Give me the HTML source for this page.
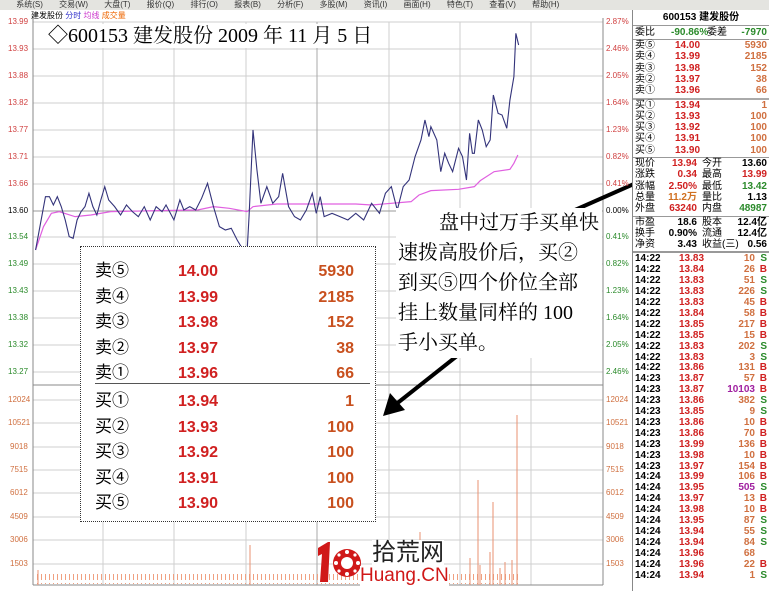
<!DOCTYPE html><html><head><meta charset="utf-8"><style>
*{margin:0;padding:0;box-sizing:border-box}
body{width:769px;height:591px;overflow:hidden;background:#fff;position:relative;font-family:"Liberation Sans","Noto Sans CJK SC",sans-serif}
.a{position:absolute;white-space:nowrap}
.ax{position:absolute;font-size:8px;line-height:8px}
.r{color:#d04040}.g{color:#2a8a2a}.o{color:#d07040}
#panel{position:absolute;left:632px;top:10px;width:137px;height:581px;border-left:1px solid #888;font-size:10px;font-weight:bold}
.row{position:absolute;left:2px;right:2px;height:11px;line-height:11px}
.row span{position:absolute}
.hl{position:absolute;left:0;right:0;height:1px;background:#999}
.bx{position:absolute;font-size:17px;line-height:20px}
</style></head><body>
<div class="a" style="left:0;top:0;width:769px;height:10px;background:#e4e4e0;font-size:8px;line-height:9px;color:#333;word-spacing:14px">&nbsp;系统(S) 交易(W) 大盘(T) 报价(Q) 排行(O) 报表(B) 分析(F) 多股(M) 资讯(I) 画面(H) 特色(T) 查看(V) 帮助(H)</div>
<div class="a" style="left:31px;top:11px;font-size:8px;line-height:9px">建发股份 <span style="color:#33c">分时</span> <span style="color:#c3c">均线</span> <span style="color:#e60">成交量</span></div>
<svg class="a" style="left:0;top:0" width="632" height="591">
<g stroke="#cfcfcf" stroke-width="1">
<line x1="33" y1="22" x2="603" y2="22"/><line x1="33" y1="49" x2="603" y2="49"/><line x1="33" y1="76" x2="603" y2="76"/><line x1="33" y1="103" x2="603" y2="103"/><line x1="33" y1="130" x2="603" y2="130"/><line x1="33" y1="157" x2="603" y2="157"/><line x1="33" y1="184" x2="603" y2="184"/><line x1="33" y1="237" x2="603" y2="237"/><line x1="33" y1="264" x2="603" y2="264"/><line x1="33" y1="291" x2="603" y2="291"/><line x1="33" y1="318" x2="603" y2="318"/><line x1="33" y1="345" x2="603" y2="345"/><line x1="33" y1="372" x2="603" y2="372"/>
<line x1="33" y1="400" x2="603" y2="400"/><line x1="33" y1="423" x2="603" y2="423"/><line x1="33" y1="447" x2="603" y2="447"/><line x1="33" y1="470" x2="603" y2="470"/><line x1="33" y1="493" x2="603" y2="493"/><line x1="33" y1="517" x2="603" y2="517"/><line x1="33" y1="540" x2="603" y2="540"/><line x1="33" y1="564" x2="603" y2="564"/>
<line x1="103" y1="22" x2="103" y2="585"/><line x1="174" y1="22" x2="174" y2="585"/><line x1="246" y1="22" x2="246" y2="585"/><line x1="389" y1="22" x2="389" y2="585"/><line x1="460" y1="22" x2="460" y2="585"/><line x1="531" y1="22" x2="531" y2="585"/>
</g>
<line x1="33" y1="211" x2="603" y2="211" stroke="#999"/>
<line x1="317" y1="22" x2="317" y2="585" stroke="#aaa"/>
<line x1="33" y1="18" x2="33" y2="585" stroke="#888"/><line x1="603" y1="18" x2="603" y2="585" stroke="#888"/>
<line x1="33" y1="385" x2="603" y2="385" stroke="#888"/><line x1="33" y1="585" x2="603" y2="585" stroke="#888"/>
<g transform="translate(0,20) scale(0.3953,0.3333)">
<polyline fill="none" stroke="#e060e0" stroke-width="1.2" vector-effect="non-scaling-stroke" points="90,690 110,620 130,580 150,575 190,590 230,585 280,575 400,572 500,570 540,560 580,565 625,575 640,560 700,552 900,552 940,555 1040,545 1060,525 1090,512 1160,508 1200,500 1215,482 1250,455 1290,448 1300,430 1310,405"/>
<polyline fill="none" stroke="#33337a" stroke-width="1.1" vector-effect="non-scaling-stroke" points="90,690 115,530 125,530 135,555 145,530 155,560 165,600 175,650 185,655 195,600 205,575 215,560 225,520 235,560 245,585 255,540 265,500 275,540 290,560 305,585 320,555 335,575 350,590 365,560 380,600 395,560 410,575 420,555 440,600 455,540 465,570 480,560 495,570 510,535 525,490 540,560 555,620 570,630 585,625 600,660 615,690 622,760 630,590 640,330 650,450 660,550 675,500 690,550 705,530 715,460 730,560 745,590 760,600 775,570 790,520 800,580 810,530 820,590 840,580 860,590 880,600 900,580 920,600 940,550 960,580 975,520 990,500 1005,570 1020,500 1035,480 1050,410 1065,360 1075,300 1085,350 1090,320 1105,360 1115,455 1125,400 1135,430 1145,455 1160,385 1170,410 1180,480 1188,340 1195,400 1200,400 1210,300 1220,330 1230,380 1240,360 1248,225 1260,280 1270,285 1282,325 1290,240 1300,170 1305,40 1312,75"/>
</g>
<defs><pattern id="vp" width="4" height="10" patternUnits="userSpaceOnUse"><rect x="1" y="3" width="1" height="7" fill="#f0a080"/></pattern></defs>
<rect x="34" y="574" width="485" height="10" fill="url(#vp)"/>
<g stroke="#e89070" stroke-width="1">
<line x1="478" y1="585" x2="478" y2="480"/><line x1="493" y1="585" x2="493" y2="502"/><line x1="517" y1="585" x2="517" y2="415"/><line x1="470" y1="585" x2="470" y2="558"/><line x1="490" y1="585" x2="490" y2="552"/><line x1="512" y1="585" x2="512" y2="560"/><line x1="420" y1="585" x2="420" y2="532"/><line x1="250" y1="585" x2="250" y2="545"/><line x1="38" y1="585" x2="38" y2="570"/><line x1="480" y1="585" x2="480" y2="565"/><line x1="500" y1="585" x2="500" y2="568"/><line x1="505" y1="585" x2="505" y2="562"/>
</g>
<line x1="575" y1="210" x2="745" y2="135" stroke="#000" stroke-width="4"/>
<polygon points="757,128 735,128 745,145" fill="#000"/>
<line x1="505" y1="318" x2="395" y2="405" stroke="#000" stroke-width="4"/>
<polygon points="383,416 390,393 405,410" fill="#000"/>
</svg>
<div class="ax r" style="left:8px;top:18px">13.99</div><div class="ax r" style="left:8px;top:45px">13.93</div><div class="ax r" style="left:8px;top:72px">13.88</div><div class="ax r" style="left:8px;top:99px">13.82</div><div class="ax r" style="left:8px;top:126px">13.77</div><div class="ax r" style="left:8px;top:153px">13.71</div><div class="ax r" style="left:8px;top:180px">13.66</div><div class="ax" style="left:8px;top:207px">13.60</div><div class="ax g" style="left:8px;top:233px">13.54</div><div class="ax g" style="left:8px;top:260px">13.49</div><div class="ax g" style="left:8px;top:287px">13.43</div><div class="ax g" style="left:8px;top:314px">13.38</div><div class="ax g" style="left:8px;top:341px">13.32</div><div class="ax g" style="left:8px;top:368px">13.27</div>
<div class="ax o" style="left:8px;top:396px">12024</div><div class="ax o" style="left:8px;top:419px">10521</div><div class="ax o" style="left:10px;top:443px">9018</div><div class="ax o" style="left:10px;top:466px">7515</div><div class="ax o" style="left:10px;top:489px">6012</div><div class="ax o" style="left:10px;top:513px">4509</div><div class="ax o" style="left:10px;top:536px">3006</div><div class="ax o" style="left:10px;top:560px">1503</div>
<div class="ax r" style="left:606px;top:18px">2.87%</div><div class="ax r" style="left:606px;top:45px">2.46%</div><div class="ax r" style="left:606px;top:72px">2.05%</div><div class="ax r" style="left:606px;top:99px">1.64%</div><div class="ax r" style="left:606px;top:126px">1.23%</div><div class="ax r" style="left:606px;top:153px">0.82%</div><div class="ax r" style="left:606px;top:180px">0.41%</div><div class="ax" style="left:606px;top:207px">0.00%</div><div class="ax g" style="left:606px;top:233px">0.41%</div><div class="ax g" style="left:606px;top:260px">0.82%</div><div class="ax g" style="left:606px;top:287px">1.23%</div><div class="ax g" style="left:606px;top:314px">1.64%</div><div class="ax g" style="left:606px;top:341px">2.05%</div><div class="ax g" style="left:606px;top:368px">2.46%</div>
<div class="ax o" style="left:606px;top:396px">12024</div><div class="ax o" style="left:606px;top:419px">10521</div><div class="ax o" style="left:606px;top:443px">9018</div><div class="ax o" style="left:606px;top:466px">7515</div><div class="ax o" style="left:606px;top:489px">6012</div><div class="ax o" style="left:606px;top:513px">4509</div><div class="ax o" style="left:606px;top:536px">3006</div><div class="ax o" style="left:606px;top:560px">1503</div>
<div class="a" style="left:44px;top:24px;background:#fff;font-family:'Liberation Serif','Noto Serif CJK SC',serif;font-size:20px;line-height:24px;padding:0 4px">◇600153 建发股份 2009 年 11 月 5 日</div>
<div class="a" style="left:80px;top:246px;width:296px;height:276px;background:#fff;border:1px dotted #333"></div>
<div class="a" style="left:95px;top:383px;width:275px;height:1px;background:#555"></div>
<div class="bx" style="left:95px;top:258px;line-height:25.5px">卖⑤<br>卖④<br>卖③<br>卖②<br>卖①</div>
<div class="bx" style="left:95px;top:388px;line-height:25.5px">买①<br>买②<br>买③<br>买④<br>买⑤</div>
<div class="bx" style="left:178px;top:259px;line-height:25.5px;font-weight:bold;font-size:16px;color:#d02020">14.00<br>13.99<br>13.98<br>13.97<br>13.96</div>
<div class="bx" style="left:178px;top:389px;line-height:25.5px;font-weight:bold;font-size:16px;color:#d02020">13.94<br>13.93<br>13.92<br>13.91<br>13.90</div>
<div class="bx" style="left:280px;width:74px;text-align:right;top:259px;line-height:25.5px;font-weight:bold;font-size:16px;color:#c8501e">5930<br>2185<br>152<br>38<br>66</div>
<div class="bx" style="left:280px;width:74px;text-align:right;top:389px;line-height:25.5px;font-weight:bold;font-size:16px;color:#c8501e">1<br>100<br>100<br>100<br>100</div>
<div class="a" style="left:396px;top:208px;width:206px;height:150px;background:#fff;font-family:'Liberation Serif','Noto Serif CJK SC',serif;font-size:20px;line-height:30px;text-align:right;padding-right:3px">盘中过万手买单快<br><div style="text-align:left;padding-left:2px">速拨高股价后，买②<br>到买⑤四个价位全部<br>挂上数量同样的 100<br>手小买单。</div></div>
<svg class="a" style="left:314px;top:540px" width="48" height="44">
<path d="M4 8 L14 2 L16 2 L14 42 L6 42 L8 14 L4 16 Z" fill="#d01818"/>
<circle cx="33" cy="23" r="14" fill="#d01818"/>
<circle cx="33" cy="23" r="6" fill="#fff"/>
<g fill="#fff"><circle cx="33" cy="12" r="2"/><circle cx="33" cy="34" r="2"/><circle cx="22" cy="23" r="2"/><circle cx="44" cy="23" r="2"/><circle cx="25" cy="15" r="1.6"/><circle cx="41" cy="31" r="1.6"/><circle cx="41" cy="15" r="1.6"/><circle cx="25" cy="31" r="1.6"/></g>
</svg>
<div class="a" style="left:372px;top:540px;font-size:24px;line-height:26px;color:#222;background:#fff">拾荒网</div>
<div class="a" style="left:360px;top:566px;font-size:19px;line-height:20px;color:#d01818;background:#fff">Huang.CN</div>
<div id="panel">
<div class="row" style="top:2px;text-align:center">600153 建发股份</div>
<div class="hl" style="top:15px"></div>
<div class="row" style="top:17px"><span style="left:0;font-weight:normal">委比</span><span class="g" style="left:36px">-90.86%</span><span style="left:72px;font-weight:normal">委差</span><span class="g" style="right:0">-7970</span></div>
<div class="hl" style="top:29px"></div>
<div id="ob"></div>
</div>
<script>
var p=document.getElementById('panel'),h='';
function row(t,a){h+='<div class="row" style="top:'+t+'px">'+a+'</div>';}
var s=[['卖⑤','14.00','5930'],['卖④','13.99','2185'],['卖③','13.98','152'],['卖②','13.97','38'],['卖①','13.96','66'],['买①','13.94','1'],['买②','13.93','100'],['买③','13.92','100'],['买④','13.91','100'],['买⑤','13.90','100']];
var t=30;
s.forEach(function(r,i){if(i==5){h+='<div class="hl" style="top:'+(t+1)+'px;background:#aaa;height:2px"></div>';t+=3;}
row(t,'<span style="left:0;font-weight:normal">'+r[0]+'</span><span style="left:40px;color:#d02020">'+r[1]+'</span><span class="o" style="right:0">'+r[2]+'</span>');t+=11.3;});
h+='<div class="hl" style="top:'+(t+1)+'px"></div>';t+=2;
var q=[['现价','13.94','#d02020','今开','13.60','#000'],['涨跌','0.34','#d02020','最高','13.99','#d02020'],['涨幅','2.50%','#d02020','最低','13.42','#2a8a2a'],['总量','11.2万','#d07020','量比','1.13','#000'],['外盘','63240','#d02020','内盘','48987','#2a8a2a']];
q.forEach(function(r){row(t,'<span style="left:0;font-weight:normal">'+r[0]+'</span><span style="right:70px;color:'+r[2]+'">'+r[1]+'</span><span style="left:67px;font-weight:normal">'+r[3]+'</span><span style="right:0;color:'+r[5]+'">'+r[4]+'</span>');t+=11.3;});
h+='<div class="hl" style="top:'+(t+1)+'px"></div>';t+=2;
[['市盈','18.6','股本','12.4亿'],['换手','0.90%','流通','12.4亿'],['净资','3.43','收益(三)','0.56']].forEach(function(r){row(t,'<span style="left:0;font-weight:normal">'+r[0]+'</span><span style="right:70px">'+r[1]+'</span><span style="left:67px;font-weight:normal">'+r[2]+'</span><span style="right:0">'+r[3]+'</span>');t+=11.3;});
h+='<div class="hl" style="top:'+(t+1)+'px;height:2px"></div>';t+=3;
var k='14:22 13.83 10 S|14:22 13.84 26 B|14:22 13.83 51 S|14:22 13.83 226 S|14:22 13.83 45 B|14:22 13.84 58 B|14:22 13.85 217 B|14:22 13.85 15 B|14:22 13.83 202 S|14:22 13.83 3 S|14:22 13.86 131 B|14:23 13.87 57 B|14:23 13.87 10103 B|14:23 13.86 382 S|14:23 13.85 9 S|14:23 13.86 10 B|14:23 13.86 70 B|14:23 13.99 136 B|14:23 13.98 10 B|14:23 13.97 154 B|14:24 13.99 106 B|14:24 13.95 505 S|14:24 13.97 13 B|14:24 13.98 10 B|14:24 13.95 87 S|14:24 13.94 55 S|14:24 13.94 84 S|14:24 13.96 68 |14:24 13.96 22 B|14:24 13.94 1 S'.split('|');
k.forEach(function(x){var r=x.split(' ');var vc=(+r[2]>500)?'#a020a0':'#d07040';row(t,'<span style="left:0">'+r[0]+'</span><span style="left:44px;color:#d02020">'+r[1]+'</span><span style="right:12px;color:'+vc+'">'+r[2]+'</span><span style="right:0;color:'+(r[3]=='S'?'#2a8a2a':'#d02020')+'">'+r[3]+'</span>');t+=10.9;});
document.getElementById('ob').outerHTML=h;
</script>
</body></html>
